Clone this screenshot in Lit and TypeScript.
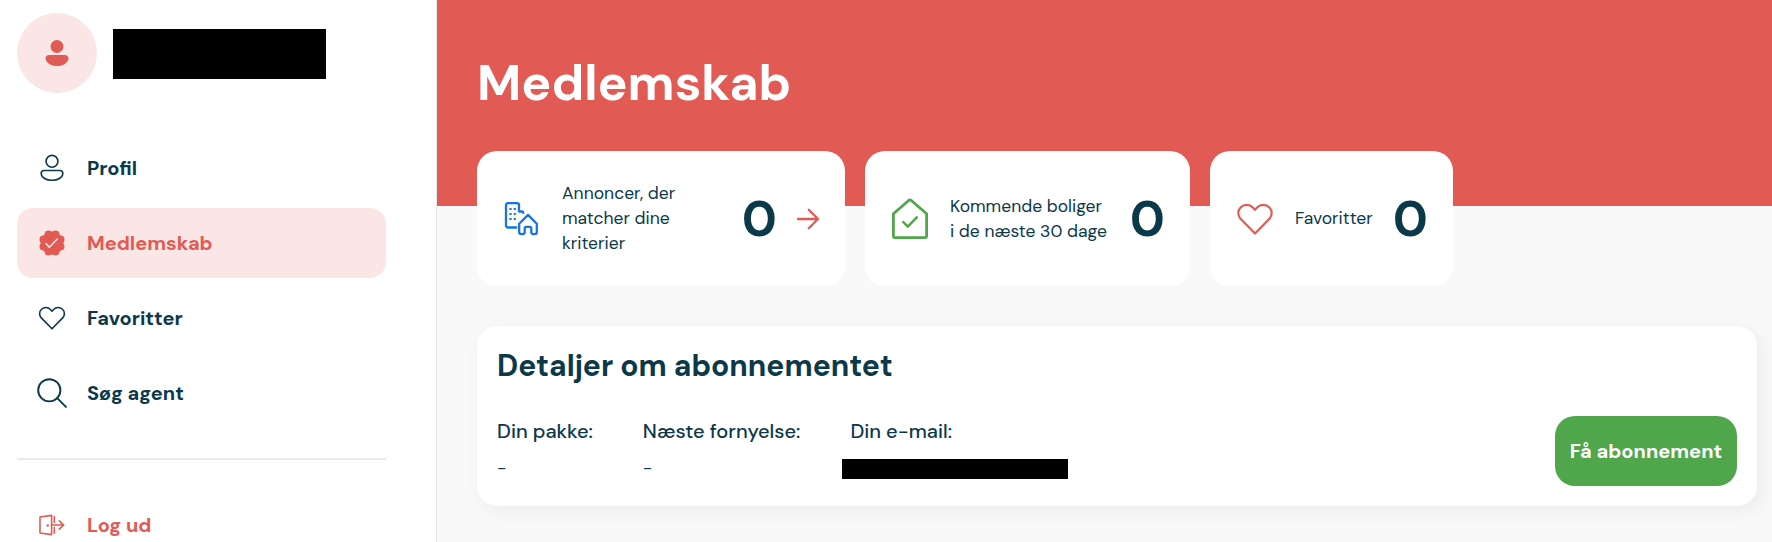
import { LitElement, html, css, svg, nothing, type TemplateResult } from "lit";
import { customElement, property } from "lit/decorators.js";
import { classMap } from "lit/directives/class-map.js";

const heart = "M15 26.5 L3.4 14.6 C1.2 12 1.3 8.200 3.600 5.900 C6.300 3.200 10.700 3.200 13.300 5.900 L15 7.800 L16.700 5.900 C19.300 3.200 23.700 3.200 26.400 5.900 C28.700 8.200 28.800 12 26.600 14.600 Z";

// Centres of the eight lobes around the badge's edge.
const lobes = Array.from({ length: 8 }, (_, i) => {
  const a = ((i + 0.5) * Math.PI) / 4;
  return [15 + 9.3 * Math.cos(a), 15 + 9.3 * Math.sin(a)];
});

const glyphs: Record<string, { box: number; body: TemplateResult }> = {
  avatar: {
    box: 30,
    body: svg`<g fill="currentColor"><circle cx="15" cy="8.500" r="6.500"/><path d="M7 17h16c2.200 0 3.400 1.300 3.400 3.200 0 4.300-5 7.800-11.400 7.800S3.600 24.500 3.600 20.200C3.600 18.300 4.800 17 7 17z"/></g>`,
  },
  profile: {
    box: 30,
    body: svg`<g stroke-width="1.600"><circle cx="15" cy="8.300" r="5.900"/><path d="M7 17.500h16c2 0 2.800 1.100 2.800 2.700 0 4-4.700 7.100-10.800 7.100S4.200 24.200 4.200 20.200c0-1.600.8-2.700 2.800-2.700z"/></g>`,
  },
  badge: {
    box: 30,
    body: svg`<g fill="currentColor"><circle cx="15" cy="15" r="11.400"/>${lobes.map(([x, y]) => svg`<circle cx=${x} cy=${y} r="3.900"/>`)}</g><path class="tick" stroke-width="1.600" d="M9 15.500l3.300 3.800 8-8.300"/>`,
  },
  heart: { box: 30, body: svg`<path stroke-width="1.700" transform="translate(0.900 0.900) scale(0.940)" d=${heart}/>` },
  search: { box: 30, body: svg`<g stroke-width="1.900"><circle cx="12.300" cy="12.300" r="11.100"/><path d="M20.200 20.200l8.700 8.700"/></g>` },
  logout: {
    box: 30,
    body: svg`<g stroke-width="1.600"><path d="M3 7l11.600-1.600v19.200L3 23z"/><path d="M17.300 6.500v6M17.300 17.500v5.800M14.800 15h12M22.300 10.900l4.400 4.100-4.400 4.100"/></g><circle cx="10.700" cy="15.500" r="1.200" fill="currentColor"/>`,
  },
  buildings: {
    box: 36,
    body: svg`<g stroke-width="2.300"><path d="M12.300 26.500H4c-1.300 0-2-.7-2-2V4.200c0-1.300.7-2 2-2h9c1.300 0 2 .7 2 2v6.300h2.600c1 0 1.600.6 1.600 1.500"/><path d="M15.200 22.700l8.800-8.800 8.800 8.800v8.300c0 1.300-.8 2.100-2.100 2.100h-1.400c-1.200 0-2-.8-2-2v-3.600c0-1-.6-1.600-1.600-1.600h-3.400c-1 0-1.600.6-1.600 1.600v3.600c0 1.200-.8 2-2 2h-1.400c-1.300 0-2.100-.8-2.100-2.100z"/></g><path fill="currentColor" d="M5.400 7.100h2.200v2H5.400zM9.700 7.100h2.200v2H9.700zM5.400 12h2.200v2H5.400zM9.700 12h2.200v2H9.700zM5.400 17h2.200v2H5.400zM9.700 17h2.200v2H9.700z"/>`,
  },
  house: {
    box: 42,
    body: svg`<g stroke-width="2.800"><path d="M4.400 15.800L19.400 2.700q1.600-1.300 3.200 0L37.600 15.800V38q0 1.600-1.600 1.600H6q-1.600 0-1.600-1.600z"/><path stroke-width="2.500" d="M14.300 24l4.500 4.600L27.800 19.300"/></g>`,
  },
  favorite: { box: 30, body: svg`<path stroke-width="1.700" d=${heart}/>` },
  arrow: { box: 24, body: svg`<path stroke-width="2.300" d="M2 12h20M12.800 2.800L22 12l-9.200 9.200"/>` },
};

@customElement("ui-icon")
class UiIcon extends LitElement {
  static styles = css`
    :host { display: block; flex: none; }
    svg { display: block; width: 100%; height: 100%; fill: none; stroke-linecap: round; stroke-linejoin: round; }
    g, path:not([fill]) { stroke: currentColor; }
    g[fill], g[fill] path { stroke: none; }
    path.tick { stroke: #fae6e4; }
  `;
  @property() name = "heart";
  render() {
    const { box, body } = glyphs[this.name];
    return html`<svg viewBox="0 0 ${box} ${box}" aria-hidden="true">${body}</svg>`;
  }
}

@customElement("side-nav")
class SideNav extends LitElement {
  static styles = css`
    :host { display: block; box-sizing: border-box; width: 437px; height: 542px; flex: none; padding: 13px 50px 0 17px; border-right: 1px solid #e7e8e9; background: #fff; overflow: hidden; }
    .user { display: flex; align-items: center; gap: 16px; height: 80px; }
    .avatar { display: grid; place-items: center; width: 80px; height: 80px; border-radius: 50%; background: #fae6e4; color: #e15a53; }
    .avatar ui-icon { width: 30px; height: 30px; }
    .name { width: 213px; height: 50px; margin-top: 1px; background: #000; }
    nav { display: flex; flex-direction: column; gap: 5px; margin-top: 40px; }
    a { display: flex; align-items: center; gap: 20px; box-sizing: border-box; height: 70px; padding-left: 20px; border-radius: 16px; color: #0b394a; font-size: 20px; font-weight: 700; line-height: 30px; }
    a ui-icon { width: 30px; height: 30px; }
    a.active { background: #fae6e4; color: #e15a53; }
    a.red { color: #e15a53; }
    hr { height: 2px; margin: 30px 0; border: 0; background: #e7e9ea; }
  `;
  render() {
    const items = [["profile", "Profil"], ["badge", "Medlemskab"], ["heart", "Favoritter"], ["search", "Søg agent"]];
    return html`
      <div class="user"><div class="avatar"><ui-icon name="avatar"></ui-icon></div><div class="name"></div></div>
      <nav>${items.map(([icon, label]) => html`<a class=${classMap({ active: icon === "badge" })}><ui-icon name=${icon}></ui-icon>${label}</a>`)}</nav>
      <hr />
      <a class="red"><ui-icon name="logout"></ui-icon>Log ud</a>`;
  }
}

@customElement("stat-card")
class StatCard extends LitElement {
  static styles = css`
    :host { display: flex; align-items: center; box-sizing: border-box; height: 135px; border-radius: 20px; background: #fff; color: #0b394a; }
    .small { width: 36px; height: 36px; margin-right: 22px; }
    .medium { width: 38px; height: 38px; margin-right: 21px; }
    .large { width: 42px; height: 42px; margin-right: 19px; }
    .blue { color: #1a73de; }
    .green { color: #50a64b; }
    .red { color: #e15a53; }
    .label { font-size: 17.500px; line-height: 25px; white-space: pre; }
    .count { margin-left: auto; font-size: 50px; font-weight: 700; line-height: 60px; }
    .arrow { width: 24px; height: 24px; margin-left: 19px; color: #e15a53; }
  `;
  @property() icon = "";
  @property() tone = "";
  @property() size = "small";
  @property() label = "";
  @property({ type: Boolean }) link = false;
  render() {
    return html`<ui-icon class="${this.size} ${this.tone}" name=${this.icon}></ui-icon>
      <div class="label">${this.label}</div>
      <div class="count">0</div>
      ${this.link ? html`<ui-icon class="arrow" name="arrow"></ui-icon>` : nothing}`;
  }
}

@customElement("app-root")
class AppRoot extends LitElement {
  static styles = css`
    :host { display: flex; width: 1772px; height: 542px; overflow: hidden; background: #f9f9f9; color: #0b394a; font-family: "DM Sans", Inter, "Open Sans", sans-serif; }
    main { flex: 1; min-width: 0; }
    header { box-sizing: border-box; height: 206px; padding: 51px 0 0 40px; background: #e15a53; }
    h1 { margin: 0; color: #fff; font-size: 50px; font-weight: 700; line-height: 65px; }
    .stats { display: flex; gap: 20px; margin: -55px 0 0 40px; }
    .ads { width: 368px; padding: 0 25px 0 27px; }
    .coming { width: 325px; padding: 0 25px 0 24px; }
    .favs { width: 243px; padding: 0 25px 0 26px; }
    .details { box-sizing: border-box; width: 1280px; height: 180px; margin: 40px 0 0 40px; padding: 20px; border-radius: 20px; background: #fff; box-shadow: 5px 5px 20px rgba(0, 0, 0, 0.06); }
    h2 { margin: 0; font-size: 30px; font-weight: 700; line-height: 39px; }
    .row { display: flex; justify-content: space-between; margin-top: 31px; }
    .facts { display: flex; gap: 50px; font-size: 20px; font-weight: 500; line-height: 30px; }
    .value { margin-top: 10px; font-size: 17.500px; font-weight: 400; line-height: 25px; }
    .redacted { width: 226px; height: 20px; margin: 13px 0 0 -8px; background: #000; }
    button { width: 182px; height: 70px; padding: 0; border: 0; border-radius: 20px; background: #50a64b; color: #fff; font: inherit; font-size: 20px; font-weight: 700; white-space: nowrap; }
  `;
  render() {
    return html`<side-nav></side-nav>
      <main>
        <header><h1>Medlemskab</h1></header>
        <div class="stats">
          <stat-card class="ads" icon="buildings" tone="blue" .label=${"Annoncer, der\nmatcher dine\nkriterier"} link></stat-card>
          <stat-card class="coming" icon="house" tone="green" size="large" .label=${"Kommende boliger\ni de næste 30 dage"}></stat-card>
          <stat-card class="favs" icon="favorite" tone="red" size="medium" .label=${"Favoritter"}></stat-card>
        </div>
        <section class="details">
          <h2>Detaljer om abonnementet</h2>
          <div class="row">
            <div class="facts">
              <div>Din pakke:<div class="value">-</div></div>
              <div>Næste fornyelse:<div class="value">-</div></div>
              <div>Din e-mail:<div class="redacted"></div></div>
            </div>
            <button>Få abonnement</button>
          </div>
        </section>
      </main>`;
  }
}
